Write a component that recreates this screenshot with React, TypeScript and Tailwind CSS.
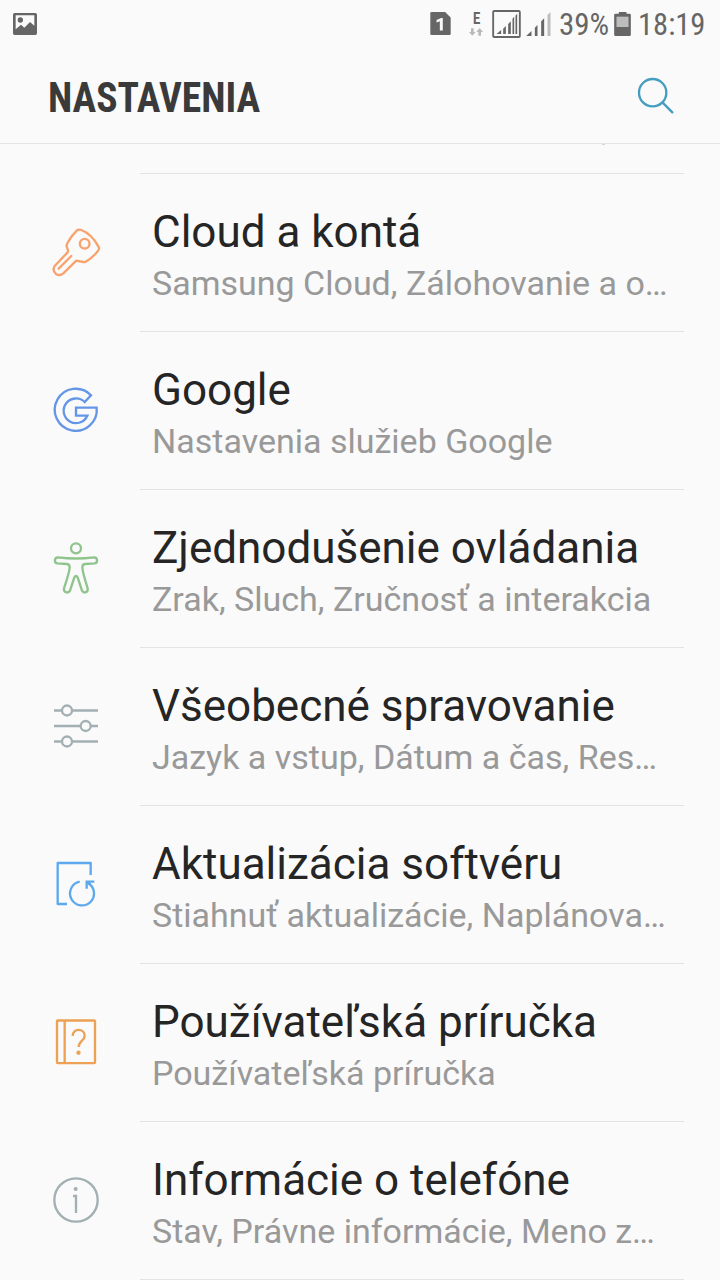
import type { ReactNode } from 'react'

type Item = {
  id: string
  title: string
  summary: string
  icon: ReactNode
}

const ICON = 'mt-[38px] ml-10 h-20 w-20 shrink-0 fill-none'

const ITEMS: Item[] = [
  {
    id: 'cloud',
    title: 'Cloud a kontá',
    summary: 'Samsung Cloud, Zálohovanie a o…',
    icon: (
      <svg viewBox="0 4 240 240" className={`${ICON} stroke-[#f8a26e]`} strokeWidth={7} strokeLinecap="round" strokeLinejoin="round">
        <path d="M111 59Q117 55 124 58Q155 70 175 107Q179 113 175 119Q158 142 137 153Q134 155 130 154L109 150L70 188Q60 197 48 190Q36 179 44 166L82 126Q85 123 84 119L80 108Q79 103 82 98Q94 75 111 59Z" />
        <circle cx="134" cy="99" r="14.5" />
        <path d="M94 136L56 174" />
      </svg>
    ),
  },
  {
    id: 'google',
    title: 'Google',
    summary: 'Nastavenia služieb Google',
    icon: (
      <svg viewBox="0 -2 240 240" className={`${ICON} stroke-[#6496e8]`} strokeWidth={7} strokeLinejoin="miter">
        <path d="M153 74A63 63 0 1 0 170 111L108 111V135H142A37 37 0 1 1 134 94Z" />
      </svg>
    ),
  },
  {
    id: 'accessibility',
    title: 'Zjednodušenie ovládania',
    summary: 'Zrak, Sluch, Zručnosť a interakcia',
    icon: (
      <svg viewBox="0 -6 240 240" className={`${ICON} stroke-[#8fc58d]`} strokeWidth={7} strokeLinejoin="round">
        <circle cx="108" cy="55" r="15" />
        <path d="M54 82Q108 89 162 82C174 82 174 99 164 100L135 102Q127 103 127 112Q127 125 143 175C145 188 131 191 126 182L113 142Q108 134 103 142L90 182C85 191 70 188 72 175Q89 125 89 112Q89 103 81 102L52 100C42 99 42 82 54 82Z" />
      </svg>
    ),
  },
  {
    id: 'general',
    title: 'Všeobecné spravovanie',
    summary: 'Jazyk a vstup, Dátum a čas, Res…',
    icon: (
      <svg viewBox="0 -12 240 240" className={`${ICON} stroke-[#a2b0b3]`} strokeWidth={7}>
        <path d="M42 61.500H65M97 61.500H174M42 108H121M153 108H174M42 154.500H65M97 154.500H174" />
        <circle cx="81" cy="61.500" r="15" />
        <circle cx="137" cy="108" r="15" />
        <circle cx="81" cy="154.500" r="15" />
      </svg>
    ),
  },
  {
    id: 'update',
    title: 'Aktualizácia softvéru',
    summary: 'Stiahnuť aktualizácie, Naplánova…',
    icon: (
      <svg viewBox="0 -3 240 240" className={`${ICON} stroke-[#5ca9ee]`} strokeWidth={7} strokeLinejoin="round">
        <path d="M81 177H53V54H152V90" />
        <path d="M119 110A36 36 0 1 0 142 113" />
        <path d="M163 110H140V131M140 110L151 119" strokeLinejoin="miter" />
      </svg>
    ),
  },
  {
    id: 'manual',
    title: 'Používateľská príručka',
    summary: 'Používateľská príručka',
    icon: (
      <svg viewBox="0 -3 240 240" className={`${ICON} stroke-[#eca155]`} strokeWidth={7} strokeLinejoin="round">
        <rect x="51" y="52.500" width="114" height="128" rx="2" />
        <path d="M74 52V180" />
        <path d="M98 99C98 74 134 75 134 99C134 113 116 113 116 132" />
        <circle cx="115.500" cy="149" r="6.500" className="fill-[#eca155] stroke-none" />
      </svg>
    ),
  },
  {
    id: 'about',
    title: 'Informácie o telefóne',
    summary: 'Stav, Právne informácie, Meno z…',
    icon: (
      <svg viewBox="0 0 240 240" className={`${ICON} stroke-[#a2b0b3]`} strokeWidth={7}>
        <circle cx="108" cy="120" r="65" />
        <path d="M99 108H108V159" />
        <circle cx="107" cy="87" r="6" className="fill-[#a2b0b3] stroke-none" />
      </svg>
    ),
  },
]

function StatusBar() {
  return (
    <div className="flex h-12 items-start text-[#666]">
      <svg viewBox="0 0 72 66" className="mt-[13px] ml-[13px] h-[22px] w-6 shrink-0">
        <path fillRule="evenodd" fill="currentColor" d="M5 0H67Q72 0 72 5V61Q72 66 67 66H5Q0 66 0 61V5Q0 0 5 0ZM8 7V49L24 35L34 44L51 27L64 38V7Z" />
        <circle cx="22" cy="21" r="8" fill="currentColor" />
      </svg>

      {/* sim, network type and signal */}
      <svg viewBox="0 0 62 70" className="mt-3 ml-[393px] h-[23px] w-[21px] shrink-0">
        <path fill="currentColor" d="M4 0H45L62 17V66Q62 70 58 70H4Q0 70 0 66V4Q0 0 4 0Z" />
        <path fill="#fafafa" d="M19 24L33 18H38V56H29V28L19 32Z" />
      </svg>
      <div className="mt-3 ml-[18px] flex w-[14px] shrink-0 flex-col items-center">
        <span className="scale-x-[0.8] font-['Roboto'] text-[16px] leading-[14px] font-bold">E</span>
        <svg viewBox="0 0 42 24" className="mt-0.5 h-2 w-[14px] fill-[#b9b9b9]">
          <path d="M6 1H14V12H20L10 23L0 12H6ZM28 23H36V12H42L32 0L22 12H28Z" />
        </svg>
      </div>
      <svg viewBox="0 0 86 84" className="mt-[10px] ml-[9px] h-7 w-[29px] shrink-0" fill="currentColor">
        <rect x="3" y="3" width="80" height="78" rx="3" fill="none" stroke="currentColor" strokeWidth="5.5" />
        <path d="M13 72L27 60V72ZM33 56L41 48V72H33ZM48 42L56 34V72H48ZM61 26L66 20V72H61ZM70 17L75 11V72H70Z" />
      </svg>
      <svg viewBox="0 0 74 72" className="mt-3 ml-[5px] h-6 w-[25px] shrink-0" fill="currentColor">
        <path d="M0 72L16 57V72ZM26 47L34 39V72H26ZM45 28L54 19V72H45Z" />
        <path d="M64 9L73 0V72H64Z" className="fill-[#bdbdbd]" />
      </svg>
      <span className="mt-[7px] ml-[8px] w-[50px] shrink-0 font-['Roboto_Condensed','Roboto'] text-[31px] leading-9">39%</span>
      <svg viewBox="0 0 50 72" className="mt-3 ml-[5px] h-6 w-[17px] shrink-0" fill="currentColor">
        <path d="M14 0H37V5H46Q50 5 50 9V68Q50 72 46 72H4Q0 72 0 68V9Q0 5 4 5H14Z" />
        <rect x="7" y="14" width="36" height="31" className="fill-[#bdbdbd]" />
      </svg>
      <span className="mt-[7px] ml-[7px] origin-left scale-x-[0.985] font-['Roboto_Condensed','Roboto'] text-[31px] leading-9">18:19</span>
    </div>
  )
}

export default function App() {
  return (
    <div className="flex h-[1280px] w-[720px] flex-col overflow-hidden bg-[#fafafa] font-['Roboto',sans-serif]">
      <StatusBar />
      <header className="flex h-24 shrink-0 items-start justify-between border-b border-[#e3e3e3]">
        <h1 className="mt-[25px] ml-12 origin-left scale-x-[0.943] font-['Roboto_Condensed','Roboto'] text-[42px] leading-[50px] font-bold text-[#3a3a3a]">NASTAVENIA</h1>
        <svg viewBox="0 0 120 120" className="mt-[27px] mr-[43px] h-10 w-10 fill-none stroke-[#459dbf]" strokeWidth={7} strokeLinecap="round">
          <circle cx="47" cy="53" r="41" />
          <path d="M77 83L106 112" />
        </svg>
      </header>

      {/* bottom edge of the row scrolled under the header */}
      <div className="mr-9 ml-[140px] h-[30px] shrink-0 border-b border-[#e3e3e3]">
        <div className="ml-[462px] h-px w-[3px] bg-[#d5d5d5]" />
      </div>

      <main>
        {ITEMS.map(item => (
          <div key={item.id} className="flex h-[158px] items-start">
            {item.icon}
            <div className="ml-5 h-[158px] w-[544px] border-b border-[#e3e3e3] pl-3 whitespace-nowrap">
              <h2 className="mt-[32px] text-[44px] leading-[52px] text-[#252525]">{item.title}</h2>
              <p className="mt-[5px] text-[34px] leading-10 text-[#999]">{item.summary}</p>
            </div>
          </div>
        ))}
      </main>
    </div>
  )
}
